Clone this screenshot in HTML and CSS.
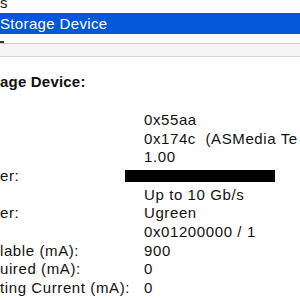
FILE: index.html
```html
<!DOCTYPE html>
<html lang="en">
<head>
    <meta charset="UTF-8">
    <title>System Information</title>
    <link rel="stylesheet" href="styles.css">
</head>
<body>
    <div class="tree">
        <div class="tree-row">s</div>
        <div class="tree-row selected">Storage Device</div>
        <div class="tree-row"><span class="stub"></span></div>
    </div>
    <div class="splitter"></div>
    <div class="detail">
        <h2 class="detail-title">age Device:</h2>
        <div class="props">
            <div class="label"></div><div class="value">0x55aa</div>
            <div class="label"></div><div class="value">0x174c&nbsp;&nbsp;(ASMedia Te</div>
            <div class="label"></div><div class="value">1.00</div>
            <div class="label">er:</div><div class="value"><span class="redacted"></span></div>
            <div class="label"></div><div class="value">Up to 10 Gb/s</div>
            <div class="label">er:</div><div class="value">Ugreen</div>
            <div class="label"></div><div class="value">0x01200000 / 1</div>
            <div class="label">lable (mA):</div><div class="value">900</div>
            <div class="label">uired (mA):</div><div class="value">0</div>
            <div class="label">ting Current (mA):</div><div class="value">0</div>
        </div>
    </div>
</body>
</html>
```

FILE: styles.css
```css
html, body {
    height: 100%;
    margin: 0;
    overflow: hidden;
}
body {
    font-family: "Liberation Sans", Arial, sans-serif;
    font-size: 15px;
    color: #111;
    background: #fff;
}
.tree {
    height: 51px;
    margin-top: -8px;
    overflow: hidden;
    letter-spacing: 0.35px;
}
.tree-row {
    height: 21px;
    line-height: 21px;
    white-space: nowrap;
}
.tree-row.selected {
    background: #0258d6;
    color: #fff;
}
.stub {
    display: inline-block;
    width: 4px;
    height: 2px;
    margin-top: 7px;
    background: #333;
    vertical-align: top;
}
.splitter {
    height: 12px;
    background: #f5f5f5;
    border-top: 1px solid #cdcdcd;
    border-bottom: 1px solid #d6d6d6;
}
.detail {
    padding-top: 16px;
    line-height: 18.67px;
}
.detail-title {
    margin: 0;
    font-size: 15px;
    font-weight: bold;
    letter-spacing: 0.2px;
}
.props {
    display: grid;
    grid-template-columns: 144px 1fr;
    margin-top: 19.3px;
    white-space: nowrap;
    letter-spacing: 0.6px;
}
.redacted {
    display: inline-block;
    width: 150px;
    height: 12px;
    margin-left: -19px;
    margin-top: 3px;
    background: #000;
    vertical-align: top;
}
```
